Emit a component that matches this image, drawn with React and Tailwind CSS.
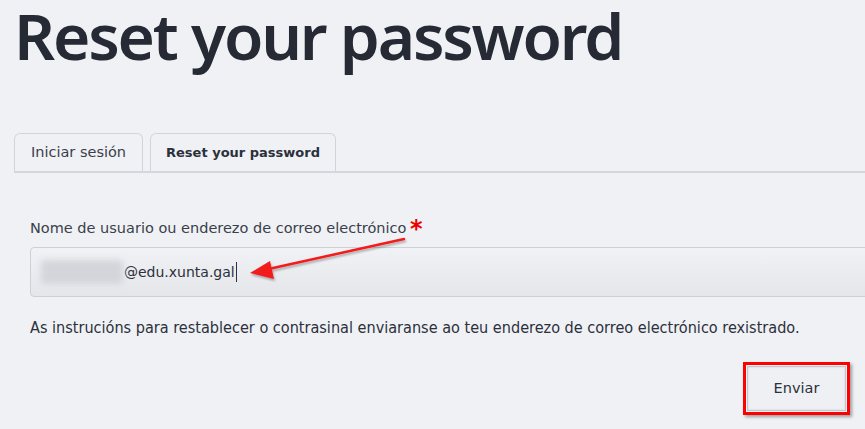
import React from "react";

const Arrow = () => (
  <svg
    className="absolute left-[240px] top-[228px] pointer-events-none"
    width="180"
    height="60"
    viewBox="0 0 180 60"
  >
    <defs>
      <filter id="sh" x="-10%" y="-30%" width="130%" height="170%">
        <feDropShadow dx="1" dy="2" stdDeviation="1.2" floodColor="#000" floodOpacity="0.3" />
      </filter>
    </defs>
    <g filter="url(#sh)">
      <line x1="164" y1="11" x2="24" y2="42" stroke="#f21b1b" strokeWidth="2.5" strokeLinecap="round" />
      <polygon points="10,45 30,33 34,51" fill="#f21b1b" />
    </g>
  </svg>
);

const App = () => {
  return (
    <div className="relative w-[865px] h-[429px] overflow-hidden bg-[#f0f1f5] text-[#2b303b]">
      <h1 className="pl-[14px] h-[133px] font-['Noto_Sans',sans-serif] font-semibold text-[64px] leading-[72px] tracking-[-2.2px] text-[#262a35]">
        Reset your password
      </h1>

      <div className="ml-[14px] flex gap-[7px] border-b-2 border-[#d4d6dc] font-['DejaVu_Sans',sans-serif]">
        <div className="w-[129px] h-[38px] flex items-center justify-center border border-b-0 border-[#d2d4da] rounded-t-[6px] text-[14.5px] text-[#3a3f4a]">
          Iniciar sesión
        </div>
        <div className="w-[186px] h-[38px] flex items-center justify-center border border-b-0 border-[#d2d4da] rounded-t-[6px] text-[13px] font-bold text-[#2b303b]">
          Reset your password
        </div>
      </div>

      <div className="pl-[30px] pt-[46px] font-['DejaVu_Sans',sans-serif]">
        <label className="relative block text-[14.5px] leading-[18px] text-[#3a3f4a]">
          Nome de usuario ou enderezo de correo electrónico
          <span className="absolute left-[380px] top-[-2px] text-[#e00] text-[24px] font-bold leading-[24px]">*</span>
        </label>
        <div className="mt-[10px] h-[50px] w-[900px] flex items-center pl-[10px] border border-[#cdd0d6] rounded-[4px] bg-gradient-to-b from-[#f1f2f5] to-[#e5e6ea] text-[14px] text-[#2b303b]">
          <span className="inline-block w-[82px] h-[24px] bg-[#d3d5da] blur-[3px] rounded-sm" />
          <span className="ml-[1px]">@edu.xunta.gal</span>
          <span className="inline-block w-px h-[20px] bg-[#2b303b] ml-[1px]" />
        </div>
        <p className="mt-[21px] font-['DejaVu_Sans_Condensed','DejaVu_Sans',sans-serif] text-[16.1px] leading-[19px] text-[#2b303b]">
          As instrucións para restablecer o contrasinal enviaranse ao teu enderezo de correo electrónico rexistrado.
        </p>
      </div>

      <div className="flex justify-end pr-[15px] pt-[25px]">
        <div className="w-[107px] h-[53px] border-[3px] border-[#f00] p-[1px] shadow-[2px_2px_3px_rgba(0,0,0,0.35)]">
          <button className="w-full h-full border border-[#c3c6cc] bg-[#eef0f4] font-['DejaVu_Sans',sans-serif] text-[14.5px] text-[#2b303b] shadow-[inset_0_0_2px_rgba(0,0,0,0.15)]">
            Enviar
          </button>
        </div>
      </div>

      <Arrow />
    </div>
  );
};

export default App;
